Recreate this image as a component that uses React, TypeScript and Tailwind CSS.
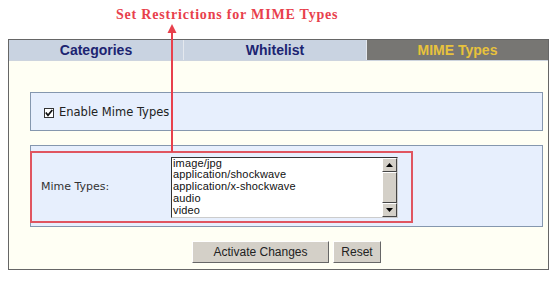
import React from "react";

const MIME_TYPES = ["image/jpg", "application/shockwave", "application/x-shockwave", "audio", "video"];

const TABS = [
  { label: "Categories", w: "w-[175px]", active: false },
  { label: "Whitelist", w: "w-[183px]", active: false },
  { label: "MIME Types", w: "flex-1", active: true },
];

export default function App() {
  return (
    <div className="relative w-[560px] h-[283px] bg-white font-['DejaVu_Sans',sans-serif]">
      {/* Annotation title */}
      <div className="h-[39px] pl-[116px] pt-[6px] text-[14px] tracking-[0.8px] font-bold text-[#e8404c] font-['Liberation_Serif',serif] leading-[18px]">
        Set Restrictions for MIME Types
      </div>

      {/* Main panel */}
      <div className="ml-[8px] w-[541px] h-[231px] border border-[#666] bg-[#fffff4]">
        {/* Tabs */}
        <div className="flex h-[21px] border-b border-[#cdd4de]">
          {TABS.map((t) => (
            <div
              key={t.label}
              className={`${t.w} flex items-center justify-center text-[14px] font-bold font-['Liberation_Sans',sans-serif] ${
                t.active ? "bg-[#777673] text-[#e8c23c]" : "bg-[#c9d3e1] text-[#1c2471] border-r border-[#e4e8ee]"
              }`}
            >
              {t.label}
            </div>
          ))}
        </div>

        <div className="pl-[21px] pt-[31px]">
          {/* Enable box */}
          <div className="w-[513px] h-[39px] bg-[#e7effd] border border-[#8597ae] flex items-center pl-[13px] pt-[2px]">
            <span className="w-[10px] h-[10px] border border-[#333] bg-white flex items-center justify-center">
              <svg width="8" height="8" viewBox="0 0 8 8">
                <path d="M0.8 3.5 L3 6.3 L7.3 1" stroke="#111" strokeWidth="1.7" fill="none" />
              </svg>
            </span>
            <span className="ml-[5px] text-[11.5px] text-[#222]">Enable Mime Types</span>
          </div>

          {/* Mime types box */}
          <div className="mt-[14px] w-[513px] h-[82px] bg-[#e7effd] border border-[#8597ae] pt-[5px]">
            <div className="-ml-px w-[383px] h-[72px] border-2 border-[#e05560] flex items-center">
              <span className="w-[139px] pl-[9px] text-[11px] text-[#333]">Mime Types:</span>
              <div className="flex w-[227px] h-[61px] border border-[#333] border-r-[#ccc] border-b-[#ccc] bg-white">
                <div className="flex-1 pl-px text-[11px] tracking-[0.15px] leading-[11.8px] text-[#111] font-['Liberation_Sans',sans-serif]">
                  {MIME_TYPES.map((m) => (
                    <div key={m}>{m}</div>
                  ))}
                </div>
                <div className="w-[15px] flex flex-col bg-[#e6e4de]">
                  <div className="h-[14px] bg-[#d4d0c8] border border-[#fff] border-r-[#444] border-b-[#444] flex items-center justify-center">
                    <svg width="7" height="4" viewBox="0 0 7 4"><path d="M3.5 0 L7 4 L0 4 Z" fill="#000" /></svg>
                  </div>
                  <div className="flex-1 bg-[#d4d0c8] border border-[#fff] border-r-[#444] border-b-[#444]" />
                  <div className="h-[14px] bg-[#d4d0c8] border border-[#fff] border-r-[#444] border-b-[#444] flex items-center justify-center">
                    <svg width="7" height="4" viewBox="0 0 7 4"><path d="M0 0 L7 0 L3.5 4 Z" fill="#000" /></svg>
                  </div>
                </div>
              </div>
            </div>
          </div>
        </div>

        {/* Buttons */}
        <div className="flex gap-[4px] pl-[183px] mt-[14px] font-['Liberation_Sans',sans-serif] text-[12px] text-[#222]">
          <button className="w-[137px] h-[22px] bg-[#d4d0c8] border border-[#fff] border-r-[#666] border-b-[#666]">
            Activate Changes
          </button>
          <button className="w-[48px] h-[22px] bg-[#d4d0c8] border border-[#fff] border-r-[#666] border-b-[#666]">
            Reset
          </button>
        </div>
      </div>

      {/* Annotation arrow */}
      <svg className="absolute left-[166px] top-[24px]" width="12" height="128" viewBox="0 0 12 128">
        <path d="M6 0 L10.5 9 L1.5 9 Z" fill="#e8404c" />
        <line x1="6" y1="8" x2="6" y2="128" stroke="#e8404c" strokeWidth="2" />
      </svg>
    </div>
  );
}
